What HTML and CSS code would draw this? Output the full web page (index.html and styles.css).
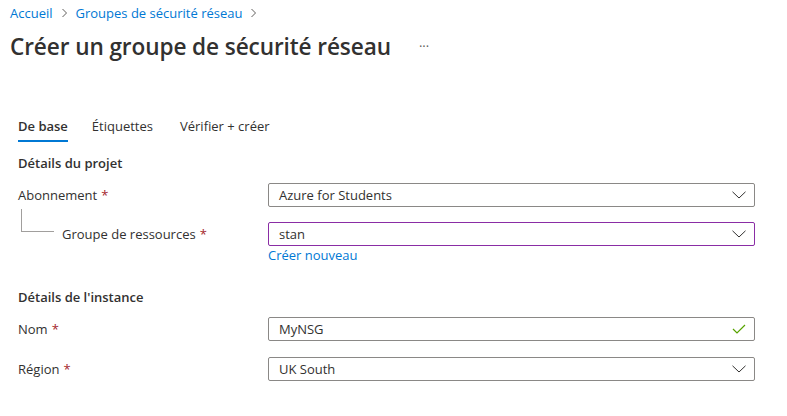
FILE: index.html
```html
<!DOCTYPE html>
<html lang="fr">
<head>
<meta charset="utf-8">
<link rel="stylesheet" href="styles.css">
</head>
<body>
<div class="page">
  <nav class="crumbs">
    <a class="crumb">Accueil</a>
    <span class="sep"><svg width="7" height="10" viewBox="0 0 7 10"><path d="M1.5 1 L5.5 5 L1.5 9" fill="none" stroke="#605e5c" stroke-width="1"/></svg></span>
    <a class="crumb">Groupes de sécurité réseau</a>
    <span class="sep"><svg width="7" height="10" viewBox="0 0 7 10"><path d="M1.5 1 L5.5 5 L1.5 9" fill="none" stroke="#605e5c" stroke-width="1"/></svg></span>
  </nav>
  <header class="titlebar">
    <h1 class="title">Créer un groupe de sécurité réseau</h1>
    <span class="more">···</span>
  </header>
  <div class="tabs">
    <div class="tab active">De base</div>
    <div class="tab">Étiquettes</div>
    <div class="tab wide">Vérifier + créer</div>
  </div>
  <section class="form">
    <h2 class="section">Détails du projet</h2>
    <div class="row first">
      <div class="label">Abonnement <span class="req">*</span></div>
      <div class="field">
        <div class="input">Azure for Students<svg class="chev" width="14" height="8" viewBox="0 0 14 8"><path d="M0.5 0.8 L7 7 L13.5 0.8" fill="none" stroke="#323130" stroke-width="1"/></svg></div>
      </div>
    </div>
    <div class="row sub">
      <div class="label nested"><span class="tree"></span>Groupe de ressources <span class="req">*</span></div>
      <div class="field">
        <div class="input focus">stan<svg class="chev" width="14" height="8" viewBox="0 0 14 8"><path d="M0.5 0.8 L7 7 L13.5 0.8" fill="none" stroke="#323130" stroke-width="1"/></svg></div>
        <a class="link">Créer nouveau</a>
      </div>
    </div>
    <h2 class="section second">Détails de l'instance</h2>
    <div class="row first">
      <div class="label">Nom <span class="req">*</span></div>
      <div class="field">
        <div class="input">MyNSG<svg class="chev" width="14" height="10" viewBox="0 0 14 10"><path d="M1 5 L5 9 L13 1" fill="none" stroke="#57a300" stroke-width="1.2"/></svg></div>
      </div>
    </div>
    <div class="row">
      <div class="label">Région <span class="req">*</span></div>
      <div class="field">
        <div class="input">UK South<svg class="chev" width="14" height="8" viewBox="0 0 14 8"><path d="M0.5 0.8 L7 7 L13.5 0.8" fill="none" stroke="#323130" stroke-width="1"/></svg></div>
      </div>
    </div>
  </section>
</div>
</body>
</html>
```
FILE: styles.css
```css
* { box-sizing: border-box; }
html, body { margin: 0; padding: 0; background: #fff; }
body {
  font-family: "Segoe UI", "Open Sans", "Noto Sans", sans-serif;
  color: #323130;
  font-size: 13px;
}
.page { width: 787px; height: 416px; overflow: hidden; }
.crumbs {
  display: flex;
  align-items: center;
  gap: 6px;
  padding: 3px 0 0 10px;
  height: 22px;
  font-size: 13px;
}
.crumb { color: #0078d4; }
.sep { display: flex; align-items: center; margin: 0 2px; }
.titlebar {
  display: flex;
  align-items: center;
  padding-left: 10px;
  margin-top: 9px;
  height: 30px;
}
.title {
  margin: 0;
  font-size: 22.6px;
  font-weight: 600;
  color: #323130;
  letter-spacing: -0.1px;
}
.more {
  margin-left: 28px;
  color: #605e5c;
  font-size: 13px;
}
.tabs {
  display: flex;
  gap: 24px;
  margin-top: 53px;
  padding-left: 18px;
}
.tab {
  font-size: 13px;
  height: 28px;
  padding-top: 2px;
  line-height: 20px;
  color: #323130;
}
.tab.wide { margin-left: 3px; }
.tab.active {
  font-weight: 600;
  border-bottom: 2px solid #0078d4;
}
.form { padding-left: 18px; }
.section {
  margin: 11px 0 0 0;
  font-size: 13px;
  font-weight: 600;
  height: 20px;
  line-height: 20px;
}
.section.second { margin-top: 23px; }
.row {
  display: flex;
  margin-top: 16px;
}
.row.first { margin-top: 10px; }
.row.sub { margin-top: 15px; }
.label {
  width: 250px;
  height: 24px;
  line-height: 24px;
  font-size: 13px;
  display: flex;
  align-items: center;
  gap: 4px;
}
.label.nested { padding-left: 44px; position: relative; }
.tree {
  position: absolute;
  left: 3px;
  top: -13px;
  width: 33px;
  height: 23px;
  border-left: 1px solid #a19f9d;
  border-bottom: 1px solid #a19f9d;
}
.req { color: #a4262c; }
.field { width: 487px; display: flex; flex-direction: column; }
.input {
  height: 24px;
  border: 1px solid #8a8886;
  border-radius: 2px;
  display: flex;
  align-items: center;
  justify-content: space-between;
  padding: 0 8px 0 10px;
  font-size: 13px;
  color: #323130;
}
.input.focus { border-color: #8a2da5; }
.chev { flex: none; }
.link {
  color: #0078d4;
  font-size: 13px;
  line-height: 18px;
}
```
